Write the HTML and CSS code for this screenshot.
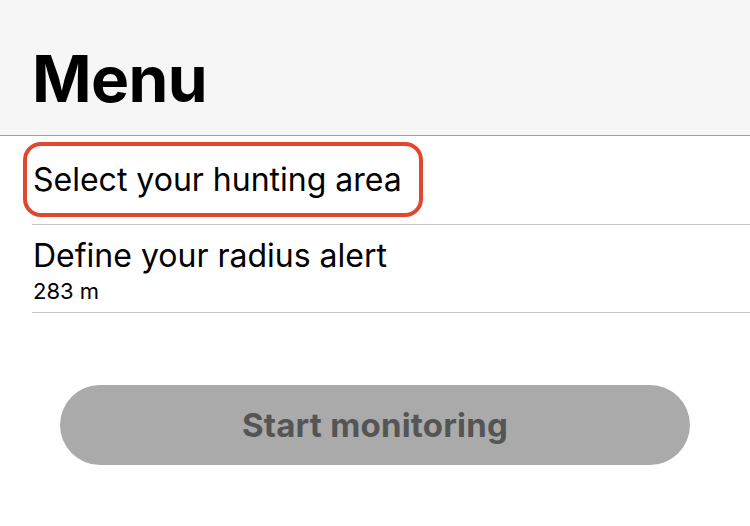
FILE: index.html
```html
<!DOCTYPE html>
<html>
<head>
<meta charset="utf-8">
<link rel="stylesheet" href="styles.css">
</head>
<body>
<header class="nav">
  <h1 class="title">Menu</h1>
</header>
<main class="list">
  <div class="row row-select">
    <span class="row-title">Select your hunting area</span>
    <span class="highlight"></span>
  </div>
  <div class="row row-radius">
    <span class="row-title">Define your radius alert</span>
    <span class="row-sub">283 m</span>
  </div>
</main>
<div class="actions">
  <button class="start">Start monitoring</button>
</div>
</body>
</html>
```
FILE: styles.css
```css
html, body {
  margin: 0;
  padding: 0;
  background: #ffffff;
  font-family: Inter, "Liberation Sans", sans-serif;
  color: #000;
  width: 750px;
  height: 526px;
  overflow: hidden;
}
.nav {
  background: #f6f6f6;
  height: 136px;
  border-bottom: 1px solid #a0a0a0;
  box-sizing: border-box;
  padding-left: 32px;
  display: flex;
  align-items: flex-end;
}
.title {
  margin: 0 0 16px 0;
  font-size: 64px;
  font-weight: 700;
  line-height: 80px;
  letter-spacing: -0.6px;
}
.list {
  padding-left: 32px;
}
.row {
  position: relative;
  border-bottom: 1px solid #c8c8c8;
  display: flex;
  flex-direction: column;
  justify-content: center;
}
.row-select {
  height: 88px;
}
.row-radius {
  height: 88px;
  padding-top: 2px;
  box-sizing: border-box;
}
.row-title {
  font-size: 32px;
  line-height: 40px;
  padding-left: 1px;
}
.row-sub {
  font-size: 22px;
  line-height: 26px;
  margin-top: 2px;
  padding-left: 1px;
}
.highlight {
  position: absolute;
  left: -9px;
  top: 6px;
  width: 400px;
  height: 75px;
  box-sizing: border-box;
  border: 4px solid #e0472f;
  border-radius: 18px;
}
.actions {
  padding: 72px 60px 0 60px;
}
.start {
  width: 630px;
  height: 80px;
  border: none;
  border-radius: 40px;
  background: #aaaaaa;
  color: #555555;
  font-family: Inter, "Liberation Sans", sans-serif;
  font-size: 33px;
  font-weight: 700;
  letter-spacing: 0.2px;
  display: flex;
  align-items: center;
  justify-content: center;
  padding: 0;
}
```
